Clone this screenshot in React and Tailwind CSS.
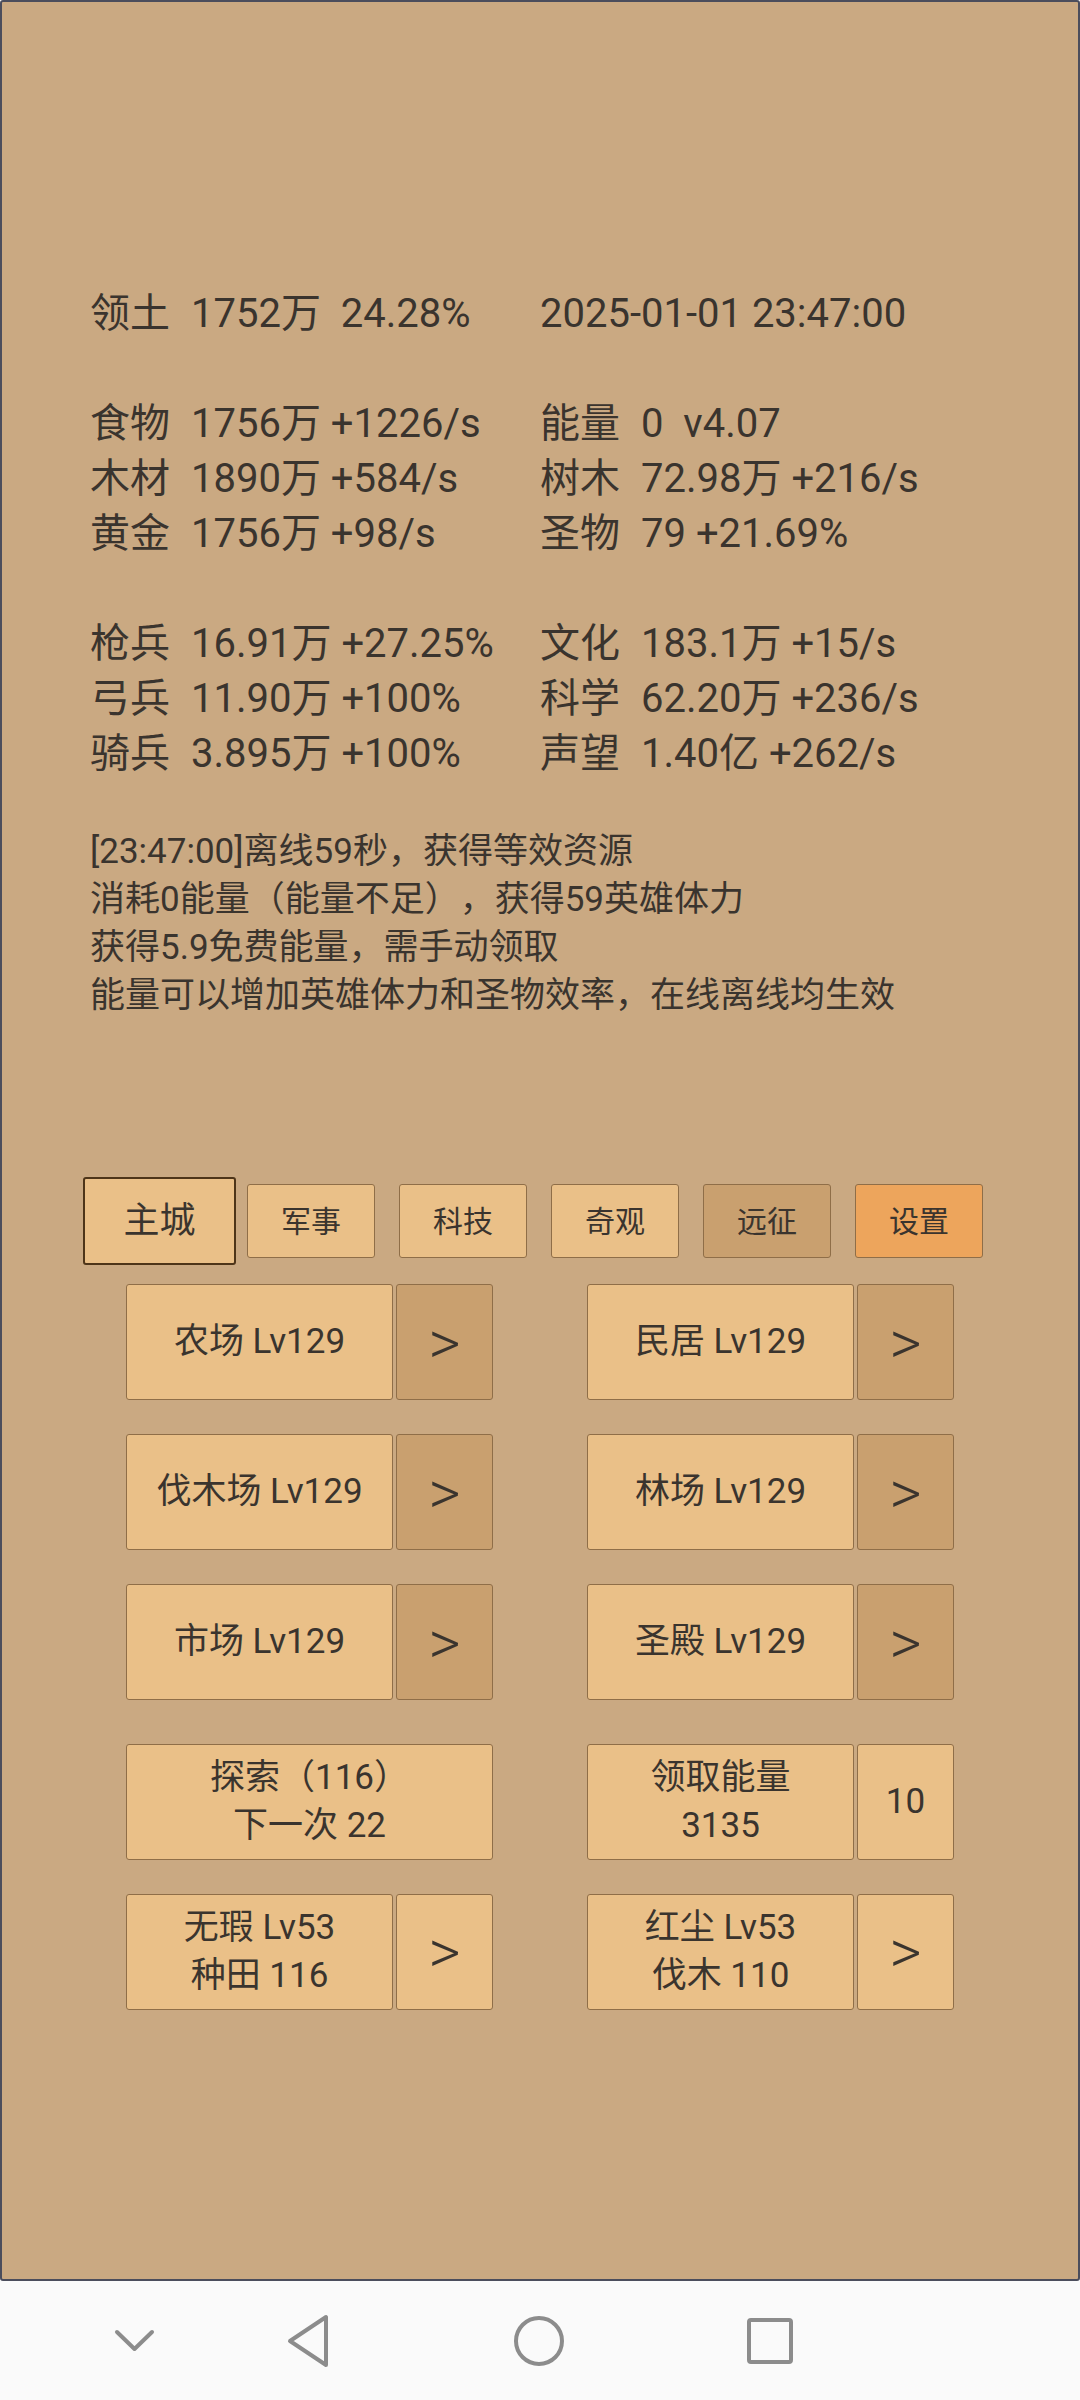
const font = { fontFamily: "Roboto, 'Noto Sans CJK SC', sans-serif" };

const stats1 = [
  ["食物", "1756万 +1226/s", "能量", "0  v4.07"],
  ["木材", "1890万 +584/s", "树木", "72.98万 +216/s"],
  ["黄金", "1756万 +98/s", "圣物", "79 +21.69%"],
];

const stats2 = [
  ["枪兵", "16.91万 +27.25%", "文化", "183.1万 +15/s"],
  ["弓兵", "11.90万 +100%", "科学", "62.20万 +236/s"],
  ["骑兵", "3.895万 +100%", "声望", "1.40亿 +262/s"],
];

const logs = [
  "[23:47:00]离线59秒，获得等效资源",
  "消耗0能量（能量不足），获得59英雄体力",
  "获得5.9免费能量，需手动领取",
  "能量可以增加英雄体力和圣物效率，在线离线均生效",
];

const tabs = [
  { name: "军事", cls: "bg-[#eac088]" },
  { name: "科技", cls: "bg-[#eac088]" },
  { name: "奇观", cls: "bg-[#eac088]" },
  { name: "远征", cls: "bg-[#c9a06f]" },
  { name: "设置", cls: "bg-[#eda55c]" },
];

const Stat = ({ label, value }) => (
  <div className="flex h-[55px] items-center">
    <span className="w-[101px] shrink-0">{label}</span>
    <span className="whitespace-pre">{value}</span>
  </div>
);

const StatRow = ({ row }) => (
  <div className="grid grid-cols-[450px_auto]">
    <Stat label={row[0]} value={row[1]} />
    <Stat label={row[2]} value={row[3]} />
  </div>
);

const Btn = ({ children, className = "" }) => (
  <div
    className={
      "flex h-[116px] items-center justify-center rounded-[3px] border border-[#8f6e48] text-center " +
      className
    }
  >
    {children}
  </div>
);

const Arrow = ({ className = "" }) => (
  <Btn className={"w-[97px] text-[62px] font-light " + className}>&gt;</Btn>
);

const Building = ({ name }) => (
  <div className="flex w-[367px] gap-[3px]">
    <Btn className="w-[267px] bg-[#eac088] text-[35px]">{name}</Btn>
    <Arrow className="bg-[#c9a06f]" />
  </div>
);

export default function App() {
  return (
    <div className="flex h-[2400px] w-[1080px] flex-col text-[#3a342e]" style={font}>
      <div className="h-[2281px] rounded-[3px] border-2 border-[#4b4d5c] bg-[#caa982]">
        <div className="pl-[88px] pt-[284px] text-[40px] leading-none">
          <div className="grid grid-cols-[450px_auto]">
            <Stat label="领土" value="1752万  24.28%" />
            <div className="flex h-[55px] items-center">2025-01-01 23:47:00</div>
          </div>
          <div className="h-[55px]" />
          {stats1.map((r) => (
            <StatRow key={r[0]} row={r} />
          ))}
          <div className="h-[55px]" />
          {stats2.map((r) => (
            <StatRow key={r[0]} row={r} />
          ))}
          <div className="mt-[46px] text-[35px] [text-spacing-trim:space-all]">
            {logs.map((l) => (
              <div key={l} className="flex h-[48px] items-center">
                {l}
              </div>
            ))}
          </div>
        </div>

        {/* tabs */}
        <div className="mt-[158px] flex items-center gap-[11px] pl-[81px]">
          <div className="flex h-[88px] w-[153px] items-center justify-center rounded-[3px] border-2 border-[#4e3519] bg-[#eac088] text-[36px]">
            主城
          </div>
          <div className="flex gap-[24px]">
            {tabs.map((t) => (
              <div
                key={t.name}
                className={
                  "flex h-[74px] w-[128px] items-center justify-center rounded-[3px] border border-[#8f6e48] text-[30px] " +
                  t.cls
                }
              >
                {t.name}
              </div>
            ))}
          </div>
        </div>

        <div className="mx-auto mt-[19px] flex w-[828px] flex-col">
          <div className="flex justify-between">
            <Building name="农场 Lv129" />
            <Building name="民居 Lv129" />
          </div>
          <div className="mt-[34px] flex justify-between">
            <Building name="伐木场 Lv129" />
            <Building name="林场 Lv129" />
          </div>
          <div className="mt-[34px] flex justify-between">
            <Building name="市场 Lv129" />
            <Building name="圣殿 Lv129" />
          </div>
          <div className="mt-[44px] flex justify-between text-[35px] leading-[48px] [text-spacing-trim:space-all]">
            <Btn className="w-[367px] bg-[#eac088]">
              <div>
                探索（116）
                <br />
                下一次 22
              </div>
            </Btn>
            <div className="flex w-[367px] gap-[3px]">
              <Btn className="w-[267px] bg-[#eac088]">
                <div>
                  领取能量
                  <br />
                  3135
                </div>
              </Btn>
              <Btn className="w-[97px] bg-[#eac088]">10</Btn>
            </div>
          </div>
          <div className="mt-[34px] flex justify-between text-[35px] leading-[48px]">
            {[
              ["无瑕 Lv53", "种田 116"],
              ["红尘 Lv53", "伐木 110"],
            ].map(([a, b]) => (
              <div key={a} className="flex w-[367px] gap-[3px]">
                <Btn className="w-[267px] bg-[#eac088]">
                  <div>
                    {a}
                    <br />
                    {b}
                  </div>
                </Btn>
                <Arrow className="bg-[#eac088]" />
              </div>
            ))}
          </div>
        </div>
      </div>

      {/* system nav bar */}
      <div className="flex h-[119px] items-center bg-[#fafafa]">
        <svg className="ml-[114px]" width="41" height="25" viewBox="0 0 41 25">
          <path d="M3 4 L20.5 21 L38 4" fill="none" stroke="#8c8c8c" strokeWidth="4" strokeLinecap="round" strokeLinejoin="round" />
        </svg>
        <svg className="ml-[131px]" width="45" height="54" viewBox="0 0 45 54">
          <path d="M40 3 L40 51 L4 27 Z" fill="none" stroke="#8c8c8c" strokeWidth="4" strokeLinejoin="round" />
        </svg>
        <svg className="ml-[181px]" width="54" height="54" viewBox="0 0 54 54">
          <circle cx="27" cy="27" r="23" fill="none" stroke="#8c8c8c" strokeWidth="4" />
        </svg>
        <svg className="ml-[180px]" width="48" height="48" viewBox="0 0 48 48">
          <rect x="3" y="3" width="42" height="42" rx="2" fill="none" stroke="#8c8c8c" strokeWidth="4" />
        </svg>
      </div>
    </div>
  );
}
